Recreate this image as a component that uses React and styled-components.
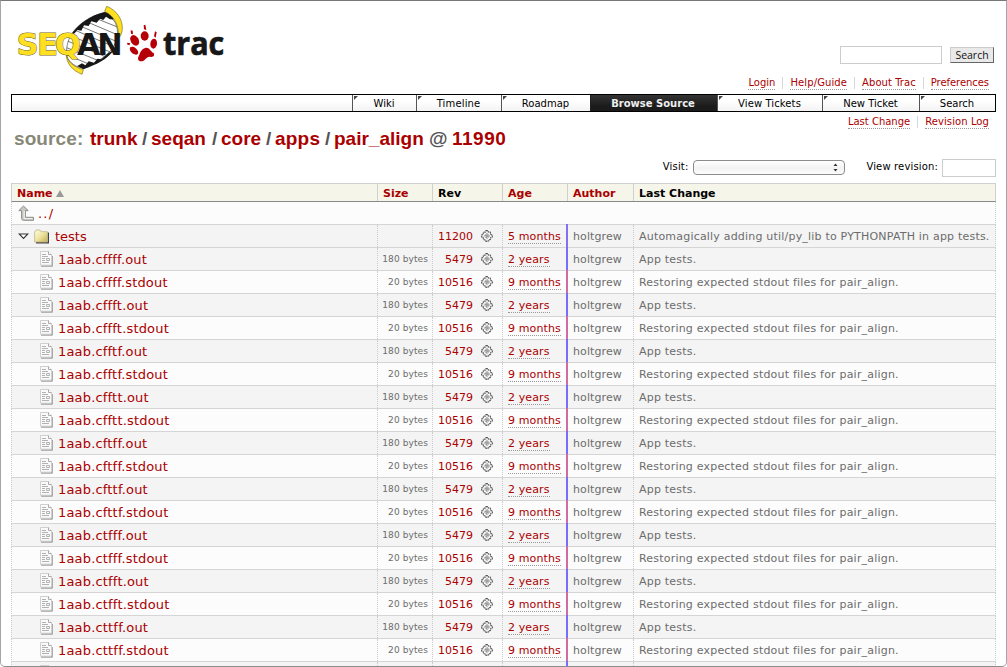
import React from "react";
import styled, { createGlobalStyle } from "styled-components";

const Global = createGlobalStyle`
  * { box-sizing: border-box; }
  html, body { margin: 0; padding: 0; background: #fff; }
  body { font-family: "DejaVu Sans", Verdana, sans-serif; font-size: 11px; color: #000; }
`;

const RED = "#aa0000";

const Page = styled.div`
  width: 1007px;
  height: 667px;
  overflow: hidden;
  border: 1px solid #a6a6a6;
  border-top-color: #777;
  border-bottom-color: #8c8c8c;
  border-radius: 0 0 5px 5px;
  padding: 0 10px;
  background: #fff;
`;

const Header = styled.header`
  height: 93px;
  display: flex;
  justify-content: space-between;
`;

const Logo = styled.svg`
  display: block;
  width: 229px;
  height: 90px;
  margin-top: -1px;
`;

const HeaderSide = styled.div`
  display: flex;
  flex-direction: column;
  align-items: flex-end;
  padding-top: 45px;
`;

const SearchForm = styled.div`
  display: flex;
  align-items: center;
  gap: 8px;
  height: 18px;
  margin-right: 2px;
`;

const TextBox = styled.div`
  width: ${(p) => p.$w}px;
  height: 18px;
  border: 1px solid #ccc;
  background: #fff;
`;

const SearchButton = styled.button`
  width: 44px;
  height: 16px;
  padding: 0;
  border: 1px solid #ccc;
  border-right-color: #666;
  border-bottom-color: #666;
  background: #e9e9e9;
  color: #111;
  font: 10.5px/14px "Open Sans", sans-serif;
  text-align: center;
`;

const LinkBar = styled.nav`
  display: flex;
  justify-content: flex-end;
  height: 12px;
  margin-top: ${(p) => p.$top}px;
  padding-right: 7px;
`;

const LinkItem = styled.span`
  display: flex;
  height: 12px;
  padding-left: 7px;
  margin-left: 7px;
  border-left: 1px solid ${(p) => (p.$first ? "transparent" : "#d7d7d7")};
`;

const DottedLink = styled.a`
  display: inline-block;
  height: 13px;
  line-height: 12px;
  font-size: ${(p) => p.$size || 10}px;
  letter-spacing: ${(p) => p.$ls || 0}px;
  color: ${RED};
  border-bottom: 1px dotted #999;
  white-space: nowrap;
`;

const MainNav = styled.nav`
  display: flex;
  width: 985px;
  height: 18px;
  border: 1px solid #000;
  background: linear-gradient(#fff 35%, #f3f3f3);
`;

const NavSpacer = styled.div`
  flex: 1;
`;

const NavTab = styled.a`
  position: relative;
  width: ${(p) => p.$w}px;
  height: 16px;
  padding-right: ${(p) => p.$pr ?? 1}px;
  border-left: 1px solid ${(p) => (p.$active ? "#222" : "#555")};
  text-align: center;
  font-size: 10px;
  line-height: 17px;
  letter-spacing: ${(p) => p.$ls || 0}px;
  color: ${(p) => (p.$active ? "#eee" : "#000")};
  font-weight: ${(p) => (p.$active ? 700 : 400)};
  background: ${(p) => (p.$active ? "linear-gradient(#343434, #1b1b1b 70%)" : "none")};
  white-space: nowrap;
  &::before {
    content: ${(p) => (p.$active ? "none" : '""')};
    position: absolute;
    left: 1px;
    top: 1px;
    border-top: 4px solid #444;
    border-right: 4px solid transparent;
  }
`;

const PathTitle = styled.h1`
  display: flex;
  align-items: baseline;
  height: 24px;
  margin: 0 0 0 3px;
  padding-bottom: 2px;
  font: bold 19px/22px "Liberation Sans", Arial, sans-serif;
  color: ${RED};
  white-space: nowrap;
`;

const PathPart = styled.span`
  width: ${(p) => p.$w}px;
  letter-spacing: ${(p) => p.$ls || 0}px;
  color: ${(p) => p.$c || RED};
`;

const Controls = styled.div`
  display: flex;
  justify-content: flex-end;
  height: 24px;
  margin-top: 7px;
  line-height: 16px;
  font-size: 10px;
`;

const Label = styled.label`
  margin: ${(p) => p.$m};
  letter-spacing: 0.15px;
  white-space: nowrap;
`;

const Select = styled.div`
  display: flex;
  justify-content: flex-end;
  align-items: center;
  width: 152px;
  height: 15px;
  margin-top: 1px;
  padding-right: 6px;
  border: 1px solid #8c8c8c;
  border-radius: 4px;
  background: linear-gradient(#fff, #f2f2f2 55%, #fdfdfd);
`;

const Listing = styled.div`
  width: 985px;
`;

const COLS = "365px 55px 70px 65px 66px 1fr";

const HeadRow = styled.div`
  display: grid;
  grid-template-columns: ${COLS};
  height: 19px;
  border: 1px solid #d0d0d0;
  border-bottom-color: #888;
  background: #f5f5ea;
`;

const HeadCell = styled.div`
  height: 17px;
  padding-left: 5px;
  line-height: 19px;
  font-weight: 700;
  font-size: 11px;
  color: ${(p) => (p.$plain ? "#000" : RED)};
  border-left: ${(p) => (p.$first ? "0" : "1px solid #d0d0d0")};
  white-space: nowrap;
`;

const Row = styled.div`
  display: grid;
  grid-template-columns: ${(p) => (p.$single ? "1fr" : COLS)};
  height: 23px;
  border: 1px dotted #ccc;
  border-width: 0 1px;
  border-bottom: 1px solid #d5d5d5;
  background: ${(p) => (p.$odd ? "#f4f4f4" : "#fcfcfc")};
`;

const Cell = styled.div`
  position: relative;
  height: 22px;
  padding-left: 5px;
  border-left: 1px dotted #ccc;
  line-height: 23px;
  font-size: 11px;
  letter-spacing: ${(p) => p.$ls || 0}px;
  color: #6c6c6c;
  white-space: nowrap;
`;

const NameCell = styled.div`
  display: flex;
  align-items: center;
  height: 22px;
  padding-left: ${(p) => p.$indent}px;
  gap: ${(p) => p.$gap}px;
`;

const NameLink = styled.a`
  font-size: 13px;
  line-height: 22px;
  padding-top: 1px;
  letter-spacing: ${(p) => p.$ls ?? 0.18}px;
  color: ${RED};
`;

const SizeCell = styled(Cell)`
  padding: 0 4px 0 0;
  text-align: right;
  font-size: 9px;
  line-height: 22px;
`;

const RevCell = styled(Cell)`
  display: flex;
  align-items: center;
  justify-content: flex-end;
  gap: 8px;
  padding: 0 9px 0 0;
  color: ${RED};
`;

const AgeCell = styled(Cell)`
  padding-top: 6px;
  line-height: 12px;
  &::after {
    content: "";
    position: absolute;
    right: -1px;
    top: -1px;
    z-index: 1;
    width: 2px;
    height: 23px;
    background: ${(p) => p.$bar};
  }
`;

const AuthorCell = styled(Cell)`
  border-left-color: transparent;
`;

const FileIcon = () => (
  <svg width="13" height="16" viewBox="0 0 13 16">
    <path d="M1 14.9H12V5" fill="none" stroke="#777" strokeWidth="1.2" />
    <path d="M.5 .5H8.5L11.5 3.5V14.2H.5Z" fill="#fafafa" stroke="#cfcfcf" />
    <path d="M8.5 .5V3.5H11.5" fill="#fff" stroke="#aaa" />
    <path d="M2 3.5H6M2 5.5H8M2 7.5H5M2 9.5H5M2 11.5H9M6.5 7.5H9.5V9.5H6.5Z" fill="none" stroke="#b2b2b2" />
  </svg>
);

const FolderIcon = () => (
  <svg width="16" height="15" viewBox="0 0 16 15">
    <defs>
      <linearGradient id="folder" x1="0" y1="0" x2="1" y2="1">
        <stop offset="0" stopColor="#fffde0" />
        <stop offset=".5" stopColor="#eee4a0" />
        <stop offset="1" stopColor="#c6ae50" />
      </linearGradient>
    </defs>
    <path d="M2 13.8H14.3V3.5" fill="none" stroke="#444" strokeWidth="1.4" />
    <path d="M.6 3L2 1H6L7.2 2.7H13.4V13H.6Z" fill="url(#folder)" stroke="#bdb58a" strokeWidth=".8" />
  </svg>
);

const UpIcon = () => (
  <svg width="17" height="17" viewBox="0 0 17 17">
    <path d="M5.5 1L.8 5.6H3.6V13.5Q3.6 15.3 5.6 15.3H15.5V12.3H7.4V5.6H10.2Z" fill="#c8c8c4" stroke="#8c8c8c" />
    <path d="M6.2 6V13.6H14.5" fill="none" stroke="#f6f6f6" />
  </svg>
);

const ExpandIcon = () => (
  <svg width="11" height="7" viewBox="0 0 11 7">
    <path d="M1.2 1H9.8L5.5 5.4Z" fill="#fff" stroke="#333" strokeWidth="1.1" />
  </svg>
);

const GearIcon = () => (
  <svg width="12" height="12" viewBox="0 0 12 12">
    <path d="M5 .6H7L7.4 2L9.4 2.2L9.8 4.6L11.4 5V7L9.8 7.4L9.4 9.6L7.4 10L7 11.4H5L4.6 10L2.4 9.6L2.2 7.4L.6 7V5L2.2 4.6L2.4 2.2L4.6 2Z" fill="#f4f4f4" stroke="#5a5a5a" strokeWidth="1.1" strokeDasharray="1.9 .6" />
    <path d="M6 3.1L8.9 6L6 8.9L3.1 6Z" fill="#ddd" stroke="#aaa" strokeWidth=".7" />
    <path d="M6 4.6L7.4 6L6 7.4L4.6 6Z" fill="#fff" stroke="#444" strokeWidth=".8" />
  </svg>
);

const SortIcon = () => (
  <svg width="9" height="7" viewBox="0 0 9 7">
    <path d="M4 0L8 7H0Z" fill="#999" />
  </svg>
);

const StepperIcon = () => (
  <svg width="5" height="9" viewBox="0 0 5 9">
    <path d="M2.5 .5L4.5 3H.5ZM2.5 8.5L.5 6H4.5Z" fill="#333" />
  </svg>
);

const SiteLogo = () => (
  <Logo viewBox="33 0 687 270">
    <defs>
      <clipPath id="helix">
        <path d="M312 38C270 48 235 72 214 103C198 130 197 160 204 176C216 196 238 204 252 204C290 190 330 160 340 140C357 115 356 82 342 62Z" />
      </clipPath>
    </defs>
    <path d="M312 38C270 48 235 72 214 103C198 130 197 160 204 176C216 196 238 204 252 204C290 190 330 160 340 140C357 115 356 82 342 62Z" fill="#fff" stroke="#444" strokeWidth="2" />
    <g clipPath="url(#helix)" stroke="#444" strokeWidth="2.2">
      <path d="M280 52L380 92M262 66L370 112M245 80L370 133M228 92L370 152M214 108L360 168M195 120L350 184M190 139L330 196M190 160L290 202" />
    </g>
    <path d="M314 36C272 46 236 70 212 106L224 100L232 90L244 92L252 76L266 78L274 64L290 68L300 56L310 60L318 50L330 58L344 58L340 40Z" fill="#171717" />
    <path d="M342 150C320 180 290 193 250 208L232 198L246 190L256 196L266 184L282 188L292 176L304 178L326 158Z" fill="#171717" />
    <path d="M320 19C350 30 368 58 367 86C366 98 363 106 357 113C355 76 346 50 314 34Z" fill="#ffdf20" stroke="#77701d" strokeWidth="2" />
    <path d="M199 160C200 182 216 199 250 209L246 223C216 211 198 190 199 160Z" fill="#ffdf20" stroke="#77701d" strokeWidth="2" />
    <text y="166" fontFamily="DejaVu Sans" fontWeight="700" fontSize="91">
      <tspan x="50 112 165" fill="#ffdf20" stroke="#6d661f" strokeWidth="3" style={{ paintOrder: "stroke" }}>SEQ</tspan>
      <tspan x="231 292" fill="#171717">AN</tspan>
    </text>
    <g fill="#b50008">
      <path d="M437 143C449 142 451 154 461 159C465 166 460 173 450 170C438 169 436 184 423 184C414 184 412 176 416 169C420 161 422 147 437 143Z" />
      <ellipse cx="404" cy="121" rx="12" ry="17" transform="rotate(-30 404 121)" />
      <ellipse cx="434" cy="108" rx="12" ry="14" />
      <ellipse cx="461" cy="131" rx="10" ry="15" transform="rotate(8 461 131)" />
      <ellipse cx="402" cy="152" rx="15" ry="9" transform="rotate(42 402 152)" />
      <path d="M392 91L398 92L399 103L393 101ZM431 76L436 74L439 90L432 88ZM465 94L470 97L467 113L462 109ZM382 128L391 130L388 136L381 133Z" />
    </g>
    <text x="489" y="164" fontFamily="Open Sans" fontWeight="700" fontSize="94" textLength="184" lengthAdjust="spacingAndGlyphs" fill="#171717" stroke="#171717" strokeWidth="2">trac</text>
  </Logo>
);

const PATTERNS = ["cffff", "cffft", "cfftf", "cfftt", "cftff", "cfttf", "ctfff", "ctfft", "cttff"];
const FILES = PATTERNS.flatMap((p) => [
  { name: `1aab.${p}.out`, size: "180 bytes", rev: "5479", age: "2 years", msg: "App tests.", bar: "#7a6cff" },
  { name: `1aab.${p}.stdout`, size: "20 bytes", rev: "10516", age: "9 months", msg: "Restoring expected stdout files for pair_align.", bar: "#d06ca0" },
]);

const EntryDetails = ({ size, rev, age, msg, bar }) => (
  <>
    <SizeCell $ls={0.1}>{size}</SizeCell>
    <RevCell>{rev}<GearIcon /></RevCell>
    <AgeCell $bar={bar}><DottedLink $size={11} $ls={0.12}>{age}</DottedLink></AgeCell>
    <AuthorCell $ls={0.1}>holtgrew</AuthorCell>
    <Cell $ls={0.2}>{msg}</Cell>
  </>
);

export default function App() {
  return (
    <>
      <Global />
      <Page>
        <Header>
          <SiteLogo />
          <HeaderSide>
            <SearchForm>
              <TextBox $w={102} />
              <SearchButton>Search</SearchButton>
            </SearchForm>
            <LinkBar $top={13}>
              <LinkItem $first><DottedLink>Login</DottedLink></LinkItem>
              <LinkItem><DottedLink $ls={0.12}>Help/Guide</DottedLink></LinkItem>
              <LinkItem><DottedLink $ls={0.05}>About Trac</DottedLink></LinkItem>
              <LinkItem><DottedLink $ls={-0.05}>Preferences</DottedLink></LinkItem>
            </LinkBar>
          </HeaderSide>
        </Header>
        <MainNav>
          <NavSpacer />
          <NavTab $w={64}>Wiki</NavTab>
          <NavTab $w={85} $ls={0.15}>Timeline</NavTab>
          <NavTab $w={89}>Roadmap</NavTab>
          <NavTab $w={127} $pr={2} $active>Browse Source</NavTab>
          <NavTab $w={105} $ls={0.1}>View Tickets</NavTab>
          <NavTab $w={97}>New Ticket</NavTab>
          <NavTab $w={76}>Search</NavTab>
        </MainNav>
        <LinkBar $top={4}>
          <LinkItem $first><DottedLink>Last Change</DottedLink></LinkItem>
          <LinkItem><DottedLink $ls={0.08}>Revision Log</DottedLink></LinkItem>
        </LinkBar>
        <PathTitle>
          <PathPart $w={76} $ls={0.1} $c="#888877">source:</PathPart>
          <PathPart $w={52}>trunk</PathPart>
          <PathPart $w={9} $c="#555">/</PathPart>
          <PathPart $w={61}>seqan</PathPart>
          <PathPart $w={9} $c="#555">/</PathPart>
          <PathPart $w={45}>core</PathPart>
          <PathPart $w={9} $c="#555">/</PathPart>
          <PathPart $w={50} $ls={0.2}>apps</PathPart>
          <PathPart $w={9} $c="#555">/</PathPart>
          <PathPart $w={95}>pair_align</PathPart>
          <PathPart $w={23} $c="#555">@</PathPart>
          <PathPart $w={60} $ls={0.5}>11990</PathPart>
        </PathTitle>
        <Controls>
          <Label $m="0 5px 0 0">Visit:</Label>
          <Select><StepperIcon /></Select>
          <Label $m="0 4px 0 21px">View revision:</Label>
          <TextBox $w={54} />
        </Controls>
        <Listing>
          <HeadRow>
            <HeadCell $first>Name <SortIcon /></HeadCell>
            <HeadCell>Size</HeadCell>
            <HeadCell $plain>Rev</HeadCell>
            <HeadCell>Age</HeadCell>
            <HeadCell>Author</HeadCell>
            <HeadCell $plain>Last Change</HeadCell>
          </HeadRow>
          <Row $single>
            <NameCell $indent={6} $gap={3}><UpIcon /><NameLink $ls={1.2}>../</NameLink></NameCell>
          </Row>
          <Row $odd>
            <NameCell $indent={6} $gap={5}>
              <ExpandIcon />
              <FolderIcon />
              <NameLink $ls={0}>tests</NameLink>
            </NameCell>
            <EntryDetails size="" rev="11200" age="5 months" bar="#8470f0" msg="Automagically adding util/py_lib to PYTHONPATH in app tests." />
          </Row>
          {FILES.map((f, i) => (
            <Row key={f.name} $odd={i % 2 === 0}>
              <NameCell $indent={28} $gap={5}><FileIcon /><NameLink>{f.name}</NameLink></NameCell>
              <EntryDetails {...f} />
            </Row>
          ))}
          <Row $odd>
            <NameCell $indent={28} $gap={5}><FileIcon /></NameCell>
            <SizeCell />
            <RevCell />
            <AgeCell $bar="#7a6cff" />
            <AuthorCell />
            <Cell />
          </Row>
        </Listing>
      </Page>
    </>
  );
}
